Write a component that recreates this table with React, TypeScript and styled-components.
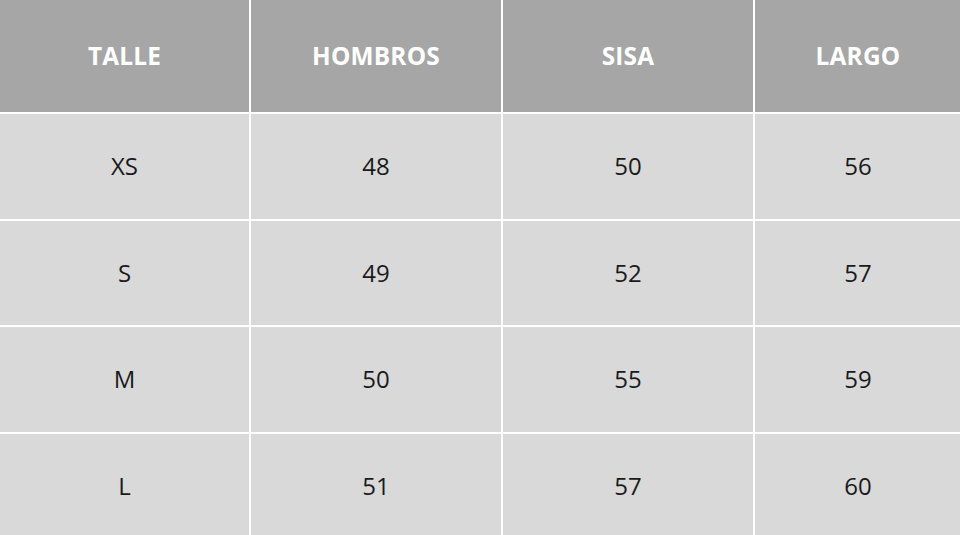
import styled, { createGlobalStyle } from "styled-components";

const GlobalStyle = createGlobalStyle`
  html, body {
    margin: 0;
    padding: 0;
    background: #ffffff;
    overflow: hidden;
  }
  body {
    font-family: "Open Sans", "Liberation Sans", sans-serif;
  }
`;

const columns = ["TALLE", "HOMBROS", "SISA", "LARGO"];

const rows = [
  ["XS", "48", "50", "56"],
  ["S", "49", "52", "57"],
  ["M", "50", "55", "59"],
  ["L", "51", "57", "60"],
];

const ScTable = styled.div`
  display: grid;
  grid-template-columns: 249px 250px 250px 206px;
  grid-template-rows: 112px repeat(4, 104.7px);
  gap: 2px;
  width: 961px;
  background-color: #ffffff;
`;

const ScCell = styled.div<{ $head?: boolean }>`
  display: flex;
  align-items: center;
  justify-content: center;
  padding-bottom: 2px;
  background-color: ${(p) => (p.$head ? "#a6a6a6" : "#d9d9d9")};
  color: ${(p) => (p.$head ? "#ffffff" : "#1a1a1a")};
  font-size: ${(p) => (p.$head ? "24.4px" : "24px")};
  font-weight: ${(p) => (p.$head ? 700 : 400)};
  letter-spacing: ${(p) => (p.$head ? "0.2px" : "0")};
`;

export default function App() {
  return (
    <>
      <GlobalStyle />
      <ScTable>
        {columns.map((c) => (
          <ScCell key={c} $head>
            {c}
          </ScCell>
        ))}
        {rows.map((r) =>
          r.map((v, i) => <ScCell key={r[0] + i}>{v}</ScCell>)
        )}
      </ScTable>
    </>
  );
}
